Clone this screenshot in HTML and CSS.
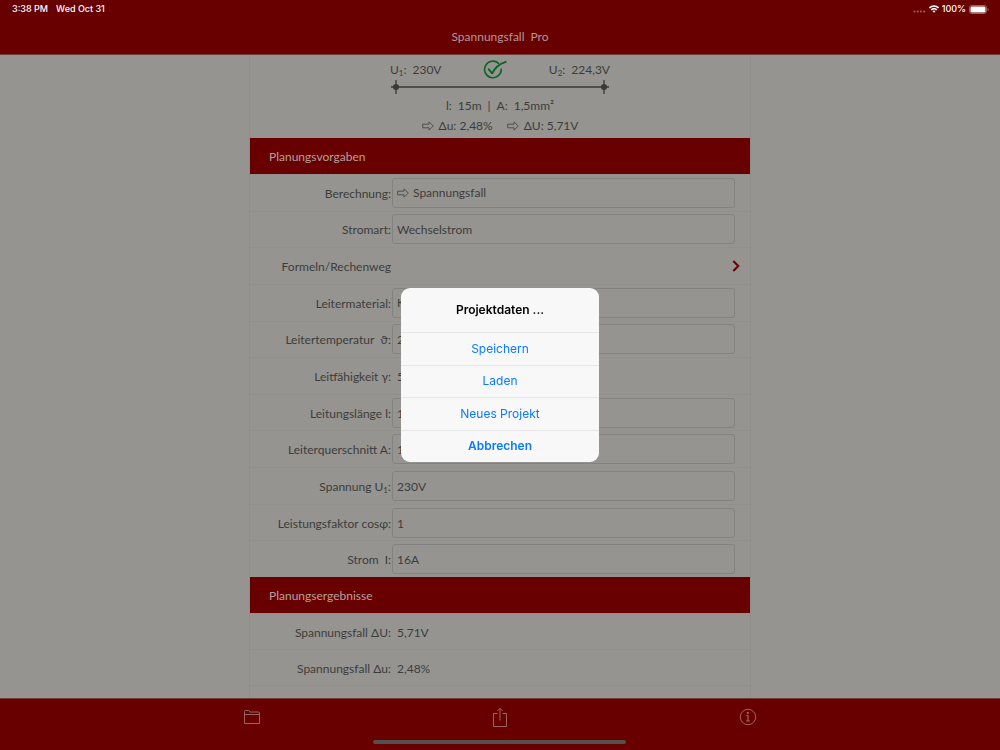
FILE: index.html
```html
<!DOCTYPE html>
<html lang="de">
<head>
<meta charset="utf-8">
<meta name="viewport" content="width=device-width, initial-scale=1">
<title>Spannungsfall Pro</title>
<link rel="stylesheet" href="styles.css">
</head>
<body>
<svg class="defs" width="0" height="0" aria-hidden="true"><symbol id="arrow" viewBox="0 0 12 10"><path d="M.7 3.200H7V.9L11.300 5L7 9.100V6.800H.7z" fill="none" stroke="#4a4a49" stroke-width=".9" stroke-linejoin="round"/></symbol></svg>
<div class="app">
  <header class="topbar">
    <div class="status">
      <div class="status-group left"><span>3:38 PM</span><span>Wed Oct 31</span></div>
      <div class="status-group right">
        <svg class="dots" width="13" height="10" viewBox="0 0 13 10" aria-hidden="true"><g fill="#a06464"><circle cx="1.500" cy="7.500" r="1"/><circle cx="4.700" cy="7.500" r="1"/><circle cx="7.900" cy="7.500" r="1"/><circle cx="11.100" cy="7.500" r="1"/></g></svg>
        <svg width="10" height="8" viewBox="0 0 10 8" aria-hidden="true"><g fill="none" stroke="#fff" stroke-width="1.500"><path d="M.5 2.900C3 .3 7 .3 9.500 2.900"/><path d="M2.200 4.900C3.800 3.300 6.200 3.300 7.800 4.900"/></g><path d="M3.400 6.100Q5 4.900 6.600 6.100L5 7.800z" fill="#fff"/></svg>
        <span>100%</span>
        <svg width="20" height="9" viewBox="0 0 20 9" aria-hidden="true"><rect x=".5" y=".5" width="17" height="8" rx="2.300" fill="none" stroke="#a06464"/><rect x="1.500" y="1.500" width="15" height="6" rx="1.300" fill="#fff"/><path d="M18.600 3v3q1-.4 1-1.500t-1-1.500z" fill="#a06464"/></svg>
      </div>
    </div>
    <h1 class="app-title">Spannungsfall&ensp;Pro</h1>
  </header>

  <main class="content">
    <div class="sheet">
      <section class="summary">
        <div class="ends">
          <span>U<sub>1</sub>:&ensp;230V</span>
          <svg width="24" height="20" viewBox="0 0 24 20" aria-hidden="true"><g fill="none" stroke="#0b6328" stroke-linecap="round" stroke-linejoin="round"><path d="M15.500 3.300A8.300 8.300 0 1 0 18.200 9.300" stroke-width="1.600"/><path d="M5.800 9.300L9.200 13.300Q13 5 22.700 1.800" stroke-width="1.900"/></g></svg>
          <span>U<sub>2</sub>:&ensp;224,3V</span>
        </div>
        <svg class="cable" width="220" height="14" viewBox="0 0 220 14" aria-hidden="true"><path d="M1 7H219M6 0V14M214 0V14" stroke="#393939" stroke-width="1.300"/><circle cx="6" cy="7" r="3" fill="#393939"/><circle cx="214" cy="7" r="3" fill="#393939"/></svg>
        <p class="facts">l:&ensp;15m&ensp;|&ensp;A:&ensp;1,5mm²</p>
        <p class="facts"><span class="fact"><svg width="12" height="10" aria-hidden="true"><use href="#arrow"/></svg>Δu: 2,48%</span><span class="fact"><svg width="12" height="10" aria-hidden="true"><use href="#arrow"/></svg>ΔU: 5,71V</span></p>
      </section>

      <h2 class="band">Planungsvorgaben</h2>
      <form class="rows inputs">
        <div class="row"><label for="calc">Berechnung:</label><div class="picker"><select id="calc" class="field"><option>Spannungsfall</option></select><svg width="12" height="10" aria-hidden="true"><use href="#arrow"/></svg></div></div>
        <div class="row"><label for="kind">Stromart:</label><select id="kind" class="field"><option>Wechselstrom</option></select></div>
        <a class="row" href="#formeln"><span class="name">Formeln/Rechenweg</span><svg class="chevron" width="8" height="12" viewBox="0 0 8 12" aria-hidden="true"><path d="M1.300 1L6.300 6L1.300 11" fill="none" stroke="#690000" stroke-width="2"/></svg></a>
        <div class="row"><label for="material">Leitermaterial:</label><select id="material" class="field"><option>Kupfer</option></select></div>
        <div class="row"><label for="temp">Leitertemperatur&ensp;ϑ:</label><select id="temp" class="field"><option>20°C</option></select></div>
        <div class="row"><span class="name">Leitfähigkeit γ:</span><output class="value">56</output></div>
        <div class="row"><label for="length">Leitungslänge l:</label><input id="length" class="field" value="15m"></div>
        <div class="row"><label for="area">Leiterquerschnitt A:</label><input id="area" class="field" value="1,5mm²"></div>
        <div class="row"><label for="volt">Spannung U<sub>1</sub>:</label><input id="volt" class="field" value="230V"></div>
        <div class="row"><label for="cos">Leistungsfaktor cosφ:</label><input id="cos" class="field" value="1"></div>
        <div class="row"><label for="amp">Strom&ensp;I:</label><input id="amp" class="field" value="16A"></div>
      </form>

      <h2 class="band">Planungsergebnisse</h2>
      <div class="rows results">
        <div class="row"><span class="name">Spannungsfall ΔU:</span><output class="value">5,71V</output></div>
        <div class="row"><span class="name">Spannungsfall Δu:</span><output class="value">2,48%</output></div>
      </div>
    </div>
  </main>

  <footer class="toolbar">
    <button type="button" aria-label="Projekte"><svg width="18" height="16" viewBox="0 0 18 16"><path d="M1.500 14.500V2.500Q1.500 1.500 2.500 1.500H5.500Q6.500 1.500 6.500 2.500V3H15.500Q16.500 3 16.500 4V14.500zM1.500 5.500H16.500" fill="none" stroke="#9b6464"/></svg></button>
    <button type="button" aria-label="Teilen"><svg width="16" height="20" viewBox="0 0 16 20"><path d="M5.500 6.500H1.500V19.500H14.500V6.500H10.500M8 13.500V1.500M5.300 4L8 1.300L10.700 4" fill="none" stroke="#9b6464"/></svg></button>
    <button type="button" aria-label="Info"><svg width="18" height="18" viewBox="0 0 18 18"><g fill="none" stroke="#9b6464"><circle cx="9" cy="9" r="7.700"/><path d="M7.200 7.500H9V13M7 13H11" stroke-width="1.200"/></g><circle cx="8.800" cy="4.900" r="1.100" fill="#9b6464"/></svg></button>
    <div class="home"></div>
  </footer>
</div>

<div class="overlay">
  <div class="dialog" role="dialog" aria-modal="true" aria-labelledby="dialog-title">
    <h2 id="dialog-title" class="dialog-title">Projektdaten ...</h2>
    <div class="actions">
      <button type="button">Speichern</button>
      <button type="button">Laden</button>
      <button type="button">Neues Projekt</button>
      <button type="button" class="cancel">Abbrechen</button>
    </div>
  </div>
</div>
</body>
</html>
```
FILE: styles.css
```css
* { box-sizing: border-box; }

body {
  margin: 0;
  background: #969490;
  color: #3c3c3c;
  font: 12px/16px Lato, "DejaVu Sans", sans-serif;
}

h1, h2, p { margin: 0; font-size: inherit; font-weight: 400; }
sub { font-size: 8px; line-height: 0; vertical-align: -2px; }
svg { display: block; flex: none; }
button, input, select { font: inherit; color: inherit; }
.defs { position: absolute; }

.app { display: flex; flex-direction: column; height: 100vh; }

.topbar { flex: none; background: #690000; text-align: center; padding-bottom: 9px; border-bottom: 1px solid #733c3a; }
.status { display: flex; justify-content: space-between; padding: 3px 12px; color: #fff; font: 500 9px/12px Inter, sans-serif; }
.status-group { display: flex; align-items: center; }
.left { gap: 8px; }
.right { gap: 3px; margin-right: -1px; }
.app-title { color: #b49696; padding-top: 11px; }

.content { flex: 1; min-height: 0; overflow: hidden; display: flex; justify-content: center; }
.sheet { width: 50%; min-width: 400px; box-shadow: 0 0 0 1px #8f8e8a; }

.summary { display: flex; flex-direction: column; align-items: center; height: 83px; padding-top: 5px; }
.ends { display: flex; justify-content: space-between; align-items: center; width: 220px; height: 20px; }
.facts { display: flex; gap: 14px; padding-top: 4px; }
.fact { display: flex; align-items: center; gap: 5px; }

.band { background: #690000; color: #b4a09e; padding: 11px 19px 9px; }

.rows { display: grid; grid-auto-rows: 1fr; }
.inputs { height: 403px; }
.results { height: 73px; border-bottom: 1px solid #92908c; }
.row { display: grid; grid-template-columns: 141px 1fr; align-items: center; column-gap: 1px; padding-right: 15px; color: inherit; text-decoration: none; border-top: 1px solid #92908c; }
.row label, .name { text-align: right; padding-top: 2px; }
.field { width: 100%; height: 30px; padding: 1px 4px 0; background: transparent; border: 1px solid #838280; border-radius: 3px; appearance: none; }
.value { padding: 2px 0 0 5px; }
.picker { display: grid; align-items: center; }
.picker > * { grid-area: 1 / 1; }
.picker .field { padding-left: 20px; }
.picker svg { margin-left: 5px; pointer-events: none; }
.chevron { justify-self: end; margin-right: -5px; }

.toolbar { flex: none; position: relative; display: flex; justify-content: space-between; align-items: flex-start; height: 52px; padding: 6px 24%; background: #690000; border-top: 1px solid #733c3a; }
.toolbar button { display: grid; place-items: center; width: 24px; height: 24px; padding: 0; border: 0; background: none; }
.home { position: absolute; left: 50%; bottom: 6px; width: 253px; height: 4px; margin-left: -127px; border-radius: 2px; background: #535050; }

.overlay { position: fixed; inset: 0; display: grid; place-items: center; }
.dialog { width: 198px; overflow: hidden; border-radius: 9px; background: #f8f8f8; font: 12px/16px Inter, sans-serif; text-align: center; }
.dialog-title { padding: 14px 8px; color: #000; font-weight: 600; }
.actions { display: grid; grid-auto-rows: 1fr; height: 130px; }
.actions button { border: 0; border-top: 1px solid #e6e6e7; background: none; padding: 0; color: #0a7aff; }
.actions .cancel { font-weight: 600; }
```
